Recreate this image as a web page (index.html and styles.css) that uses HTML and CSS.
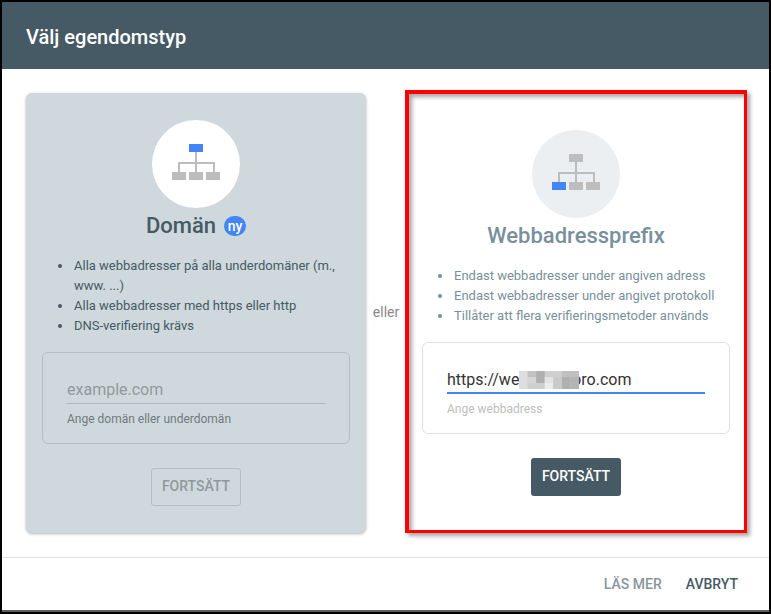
FILE: index.html
```html
<!DOCTYPE html>
<html lang="sv">
<head>
<meta charset="utf-8">
<title>Välj egendomstyp</title>
<link rel="stylesheet" href="styles.css">
</head>
<body>
<div class="dialog">
  <header class="dialog-header">Välj egendomstyp</header>
  <main class="dialog-content">
    <section class="card card-domain">
      <div class="circle">
        <svg class="tree" width="88" height="88" viewBox="0 0 88 88">
          <path class="tree-line" d="M43 32h2v10h18v10h-2v-8H45v8h-2v-8H28v8h-2V42h17z"/>
          <rect class="tree-blue" x="37" y="24" width="14" height="8"/>
          <rect class="tree-grey" x="20" y="52" width="14" height="8"/>
          <rect class="tree-grey" x="37" y="52" width="14" height="8"/>
          <rect class="tree-grey" x="54" y="52" width="14" height="8"/>
        </svg>
      </div>
      <h2 class="card-title">Domän <span class="badge">ny</span></h2>
      <ul class="features">
        <li>Alla webbadresser på alla underdomäner (m., www. ...)</li>
        <li>Alla webbadresser med https eller http</li>
        <li>DNS-verifiering krävs</li>
      </ul>
      <div class="field-box">
        <div class="field-value placeholder">example.com</div>
        <div class="field-help">Ange domän eller underdomän</div>
      </div>
      <div class="btn btn-disabled">FORTSÄTT</div>
    </section>

    <div class="or">eller</div>

    <section class="card card-prefix">
      <div class="circle">
        <svg class="tree" width="88" height="88" viewBox="0 0 88 88">
          <path class="tree-line" d="M43 32h2v10h18v10h-2v-8H45v8h-2v-8H28v8h-2V42h17z"/>
          <rect class="tree-grey" x="37" y="24" width="14" height="8"/>
          <rect class="tree-blue" x="20" y="52" width="14" height="8"/>
          <rect class="tree-grey" x="37" y="52" width="14" height="8"/>
          <rect class="tree-grey" x="54" y="52" width="14" height="8"/>
        </svg>
      </div>
      <h2 class="card-title">Webbadressprefix</h2>
      <ul class="features">
        <li>Endast webbadresser under angiven adress</li>
        <li>Endast webbadresser under angivet protokoll</li>
        <li>Tillåter att flera verifieringsmetoder används</li>
      </ul>
      <div class="field-box">
        <div class="field-value active">https://we<svg class="mosaic" width="60" height="18" viewBox="0 0 7 3" preserveAspectRatio="none">
            <rect width="7" height="3" fill="#cfcfcf"/>
            <rect x="0" y="0" width="1" height="3" fill="#dedede"/>
            <rect x="1" y="0" width="1" height="1" fill="#c2c2c2"/>
            <rect x="1" y="1" width="1" height="1" fill="#d6d6d6"/>
            <rect x="2" y="0" width="1" height="2" fill="#b0b0b0"/>
            <rect x="3" y="1" width="1" height="1" fill="#e2e2e2"/>
            <rect x="3" y="2" width="1" height="1" fill="#ececec"/>
            <rect x="4" y="1" width="1" height="2" fill="#cacaca"/>
            <rect x="5" y="0" width="2" height="1" fill="#c0c0c0"/>
            <rect x="5" y="1" width="1" height="2" fill="#b0b0b0"/>
            <rect x="6" y="1" width="1" height="2" fill="#b4b4b4"/>
          </svg>pro.com</div>
        <div class="field-help">Ange webbadress</div>
      </div>
      <div class="btn btn-primary">FORTSÄTT</div>
      <div class="highlight"></div>
    </section>
  </main>
  <footer class="dialog-footer">
    <span class="link link-muted">LÄS MER</span>
    <span class="link link-dark">AVBRYT</span>
  </footer>
</div>
</body>
</html>
```
FILE: styles.css
```css
* { box-sizing: border-box; }
html, body { margin: 0; padding: 0; background: #fff; }
body { font-family: Roboto, "Liberation Sans", sans-serif; width: 771px; height: 614px; overflow: hidden; }

.dialog {
  width: 771px;
  height: 614px;
  display: flex;
  flex-direction: column;
  border: 2px solid #000;
  box-shadow: inset 0 -2px 0 #5f5f5f;
  padding-bottom: 2px;
}

.dialog-header {
  height: 67px;
  flex: none;
  display: flex;
  align-items: center;
  padding: 2px 0 0 24px;
  background: #455a64;
  color: #fff;
  font-size: 20px;
  font-weight: 500;
}

.dialog-content {
  flex: none;
  height: 488px;
  display: flex;
  padding: 24px 0 24px 24px;
}

.card {
  position: relative;
  width: 340px;
  height: 440px;
  flex: none;
  display: flex;
  flex-direction: column;
  align-items: center;
  justify-content: center;
  border-radius: 6px;
}
.card-domain {
  background: #cfd8dc;
  box-shadow: 0 1px 3px rgba(0,0,0,.3);
  color: #455a64;
}
.card-prefix { background: #fff; color: #78909c; }

.or {
  width: 40px;
  flex: none;
  align-self: center;
  text-align: center;
  margin-bottom: 2px;
  font-size: 14px;
  color: #8a8a8a;
}

.circle {
  width: 88px;
  height: 88px;
  flex: none;
  border-radius: 50%;
}
.card-domain .circle { background: #fff; }
.card-prefix .circle { background: #eceff1; }
.tree { display: block; }
.tree-line, .tree-grey { fill: #bdbdbd; }
.tree-blue { fill: #4285f4; }

.card-title {
  display: flex;
  align-items: center;
  justify-content: center;
  gap: 8px;
  margin: 2px 0 0;
  height: 30px;
  font-size: 22px;
  font-weight: 500;
}
.badge {
  display: flex;
  align-items: center;
  justify-content: center;
  width: 22px;
  height: 20px;
  border-radius: 10px;
  background: #4285f4;
  color: #fff;
  font-size: 14px;
  font-weight: 500;
  margin-top: 2px;
}

.features {
  list-style: none;
  width: 100%;
  margin: 16px 0 0;
  padding: 0 16px 0 48px;
  font-size: 13px;
  line-height: 20px;
}
.features li { position: relative; }
.features li::before {
  content: "";
  position: absolute;
  left: -16px;
  top: 8px;
  width: 4px;
  height: 4px;
  border-radius: 50%;
  background: currentColor;
}

.field-box {
  width: 308px;
  height: 92px;
  flex: none;
  margin-top: 16px;
  padding: 25px 24px 0 24px;
  border: 1px solid #e0e0e0;
  border-radius: 6px;
}
.card-domain .field-box { border-color: #b5bfc3; }
.field-value {
  height: 26px;
  font-size: 16px;
  line-height: 24px;
  white-space: nowrap;
}
.placeholder { color: #909a9f; border-bottom: 1px solid #b0babe; }
.active { color: #333; border-bottom: 2px solid #4285f4; }
.mosaic { display: inline-block; vertical-align: -4px; position: relative; margin-right: -7px; }
.field-help { margin-top: 8px; font-size: 12px; line-height: 14px; }
.card-domain .field-help { color: #6f7b80; }
.card-prefix .field-help { color: #bdbdbd; }

.btn {
  width: 90px;
  height: 38px;
  flex: none;
  margin-top: 24px;
  padding-bottom: 2px;
  display: flex;
  align-items: center;
  justify-content: center;
  border-radius: 3px;
  font-size: 14px;
  font-weight: 500;
}
.btn-disabled { color: #8f989c; border: 1px solid #b5bfc3; }
.btn-primary { background: #455a64; color: #fff; }

.highlight {
  position: absolute;
  left: -1px;
  top: -3px;
  width: 342px;
  height: 443px;
  border-style: solid;
  border-color: #f00;
  border-width: 4px 3px 3px 4px;
  box-shadow: 3px 3px 4px rgba(0,0,0,.35), inset 3px 3px 4px rgba(0,0,0,.35);
}

.dialog-footer {
  height: 53px;
  flex: none;
  display: flex;
  align-items: center;
  justify-content: flex-end;
  gap: 24px;
  padding-right: 31px;
  border-top: 1px solid #e0e0e0;
  font-size: 14px;
  font-weight: 500;
}
.link-muted { color: #8a969c; }
.link-dark { color: #455a64; }
```
